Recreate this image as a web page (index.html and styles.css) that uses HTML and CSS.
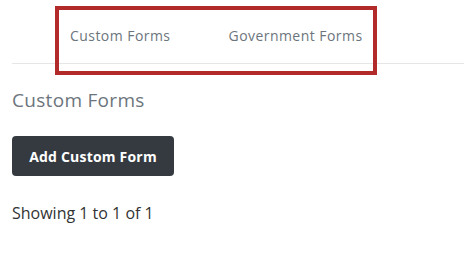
FILE: index.html
```html
<!DOCTYPE html>
<html>
    <head>
        <meta charset="UTF-8" />
        <title>Custom Forms</title>
        <link rel="stylesheet" href="styles.css">
    </head>
    <body>
        <div class="page">
            <!-- Tabs -->
            <div class="tabs">
                <a class="tab" href="#">Custom Forms</a>
                <a class="tab" href="#">Government Forms</a>
                <div class="highlight"></div>
            </div>

            <h2 class="title">Custom Forms</h2>
            <button class="btn">Add Custom Form</button>
            <p class="showing">Showing 1 to 1 of 1</p>
        </div>
    </body>
</html>
```

FILE: styles.css
```css
body {
    margin: 0;
    font-family: "Open Sans", sans-serif;
    background-color: #fff;
}

.page {
    padding: 0 0 0 12px;
}

.tabs {
    position: relative;
    display: flex;
    height: 63px;
    padding-left: 58px;
    border-bottom: 1px solid #e6e6e6;
}

.tab {
    color: #6c757d;
    font-size: 14px;
    letter-spacing: 0.45px;
    text-decoration: none;
    line-height: 20px;
    margin-top: 26px;
    margin-right: 58px;
}

.highlight {
    position: absolute;
    left: 43px;
    top: 6px;
    width: 314px;
    height: 61px;
    border: 4px solid #b22a2a;
}

.title {
    margin: 24px 0 0 0;
    font-size: 19px;
    font-weight: normal;
    letter-spacing: 0.3px;
    color: #6c757d;
    line-height: 24px;
}

.btn {
    display: block;
    margin-top: 24px;
    width: 162px;
    height: 40px;
    background-color: #343a40;
    color: #fff;
    border: none;
    border-radius: 4px;
    font-family: inherit;
    font-size: 14px;
    font-weight: bold;
    letter-spacing: 0.2px;
}

.showing {
    margin: 26px 0 0 0;
    font-size: 16px;
    color: #333;
    line-height: 22px;
}
```
